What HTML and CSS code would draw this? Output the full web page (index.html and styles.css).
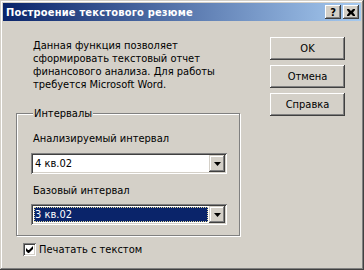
FILE: index.html
```html
<!DOCTYPE html>
<html lang="ru">
<head>
  <meta charset="UTF-8" />
  <title>Построение текстового резюме</title>
  <link rel="stylesheet" href="styles.css">
</head>
<body>
  <div class="window">
    <div class="titlebar">
      <span class="title">Построение текстового резюме</span>
      <div class="caption-btns">
        <span class="cbtn help">?</span>
        <span class="cbtn">
          <svg width="8" height="7" viewBox="0 0 8 7"><path d="M0 0h2l2 2 2-2h2v1l-2 2.5 2 2.5v1h-2l-2-2-2 2h-2v-1l2-2.5-2-2.5z" fill="#000"/></svg>
        </span>
      </div>
    </div>

    <div class="body">
      <div class="main">
        <p class="info">Данная функция позволяет<br>сформировать текстовый отчет<br>финансового анализа. Для работы<br>требуется Microsoft Word.</p>

        <fieldset class="group">
          <legend>Интервалы</legend>
          <div class="field-label">Анализируемый интервал</div>
          <div class="combo">
            <span class="combo-value">4 кв.02</span>
            <span class="combo-btn"><svg width="7" height="4" viewBox="0 0 7 4"><path d="M0 0h7l-3.5 4z" fill="#000"/></svg></span>
          </div>
          <div class="field-label">Базовый интервал</div>
          <div class="combo">
            <span class="combo-value selected">3 кв.02</span>
            <span class="combo-btn"><svg width="7" height="4" viewBox="0 0 7 4"><path d="M0 0h7l-3.5 4z" fill="#000"/></svg></span>
          </div>
        </fieldset>

        <div class="check-row">
          <span class="checkbox">
            <svg width="7" height="7" viewBox="0 0 7 7"><path d="M0 2v3l2 2h1l4-4v-3l-4 4h-1z" fill="#000"/></svg>
          </span>
          <span>Печатать с текстом</span>
        </div>
      </div>

      <div class="buttons">
        <span class="btn">OK</span>
        <span class="btn">Отмена</span>
        <span class="btn">Справка</span>
      </div>
    </div>
  </div>
</body>
</html>
```

FILE: styles.css
```css
* {
  box-sizing: border-box;
  margin: 0;
  padding: 0;
}

body {
  background: #d4d0c8;
  font-family: "DejaVu Sans Condensed", "DejaVu Sans", sans-serif;
  font-stretch: semi-condensed;
  font-size: 11px;
  line-height: 13px;
  color: #000;
}

.window {
  width: 364px;
  height: 270px;
  padding: 3px;
  background: #d4d0c8;
  box-shadow: inset -1px -1px #404040, inset 1px 1px #d4d0c8,
              inset -2px -2px #808080, inset 2px 2px #fff;
}

/* caption */
.titlebar {
  height: 18px;
  padding: 0 2px 0 3px;
  display: flex;
  align-items: center;
  justify-content: space-between;
  background: linear-gradient(to right, #0a246a, #a6caf0);
}

.title {
  color: #fff;
  font-weight: bold;
  letter-spacing: 0.2px;
}

.caption-btns {
  display: flex;
  gap: 2px;
}

.cbtn {
  width: 16px;
  height: 14px;
  display: flex;
  align-items: center;
  justify-content: center;
  background: #d4d0c8;
  font-family: "DejaVu Sans", sans-serif;
  font-weight: bold;
  font-size: 11px;
  box-shadow: inset -1px -1px #404040, inset 1px 1px #fff,
              inset -2px -2px #808080;
}

/* content */
.body {
  display: flex;
  padding: 16px 0 0 13px;
}

.main {
  width: 224px;
}

.info {
  margin: 2px 0 0 17px;
}

.group {
  margin-top: 16px;
  height: 129px;
  padding: 12px 0 0 14px;
  border: 1px solid #808080;
  box-shadow: inset 1px 1px #fff, 1px 1px #fff;
}

.group legend {
  margin-left: 2px;
  padding: 0 1px;
  background: #d4d0c8;
}

.field-label {
  margin-left: 2px;
  height: 13px;
}

.field-label + .combo {
  margin-top: 8px;
}

.combo + .field-label {
  margin-top: 10px;
}

.combo + .field-label + .combo {
  margin-top: 7px;
}

.combo {
  width: 196px;
  height: 21px;
  display: flex;
  padding: 2px;
  background: #fff;
  box-shadow: inset 1px 1px #808080, inset -1px -1px #fff,
              inset 2px 2px #404040, inset -2px -2px #d4d0c8;
}

.combo-value {
  flex: 1;
  margin: 1px;
  padding-left: 1px;
  line-height: 15px;
}

.combo-value.selected {
  background: #0a246a;
  color: #fff;
  outline: 1px dotted #e0d8a0;
  outline-offset: -1px;
}

.combo-btn {
  width: 16px;
  height: 17px;
  display: flex;
  align-items: center;
  justify-content: center;
  background: #d4d0c8;
  box-shadow: inset -1px -1px #404040, inset 1px 1px #d4d0c8,
              inset -2px -2px #808080, inset 2px 2px #fff;
}

.check-row {
  display: flex;
  align-items: center;
  gap: 3px;
  margin: 7px 0 0 7px;
}

.checkbox {
  width: 13px;
  height: 13px;
  display: flex;
  align-items: center;
  justify-content: center;
  background: #fff;
  box-shadow: inset 1px 1px #808080, inset -1px -1px #fff,
              inset 2px 2px #404040, inset -2px -2px #d4d0c8;
}

/* dialog buttons */
.buttons {
  display: flex;
  flex-direction: column;
  gap: 5px;
  margin-left: 30px;
}

.btn {
  width: 75px;
  height: 23px;
  display: flex;
  align-items: center;
  justify-content: center;
  box-shadow: inset -1px -1px #404040, inset 1px 1px #fff,
              inset -2px -2px #808080;
}
```
